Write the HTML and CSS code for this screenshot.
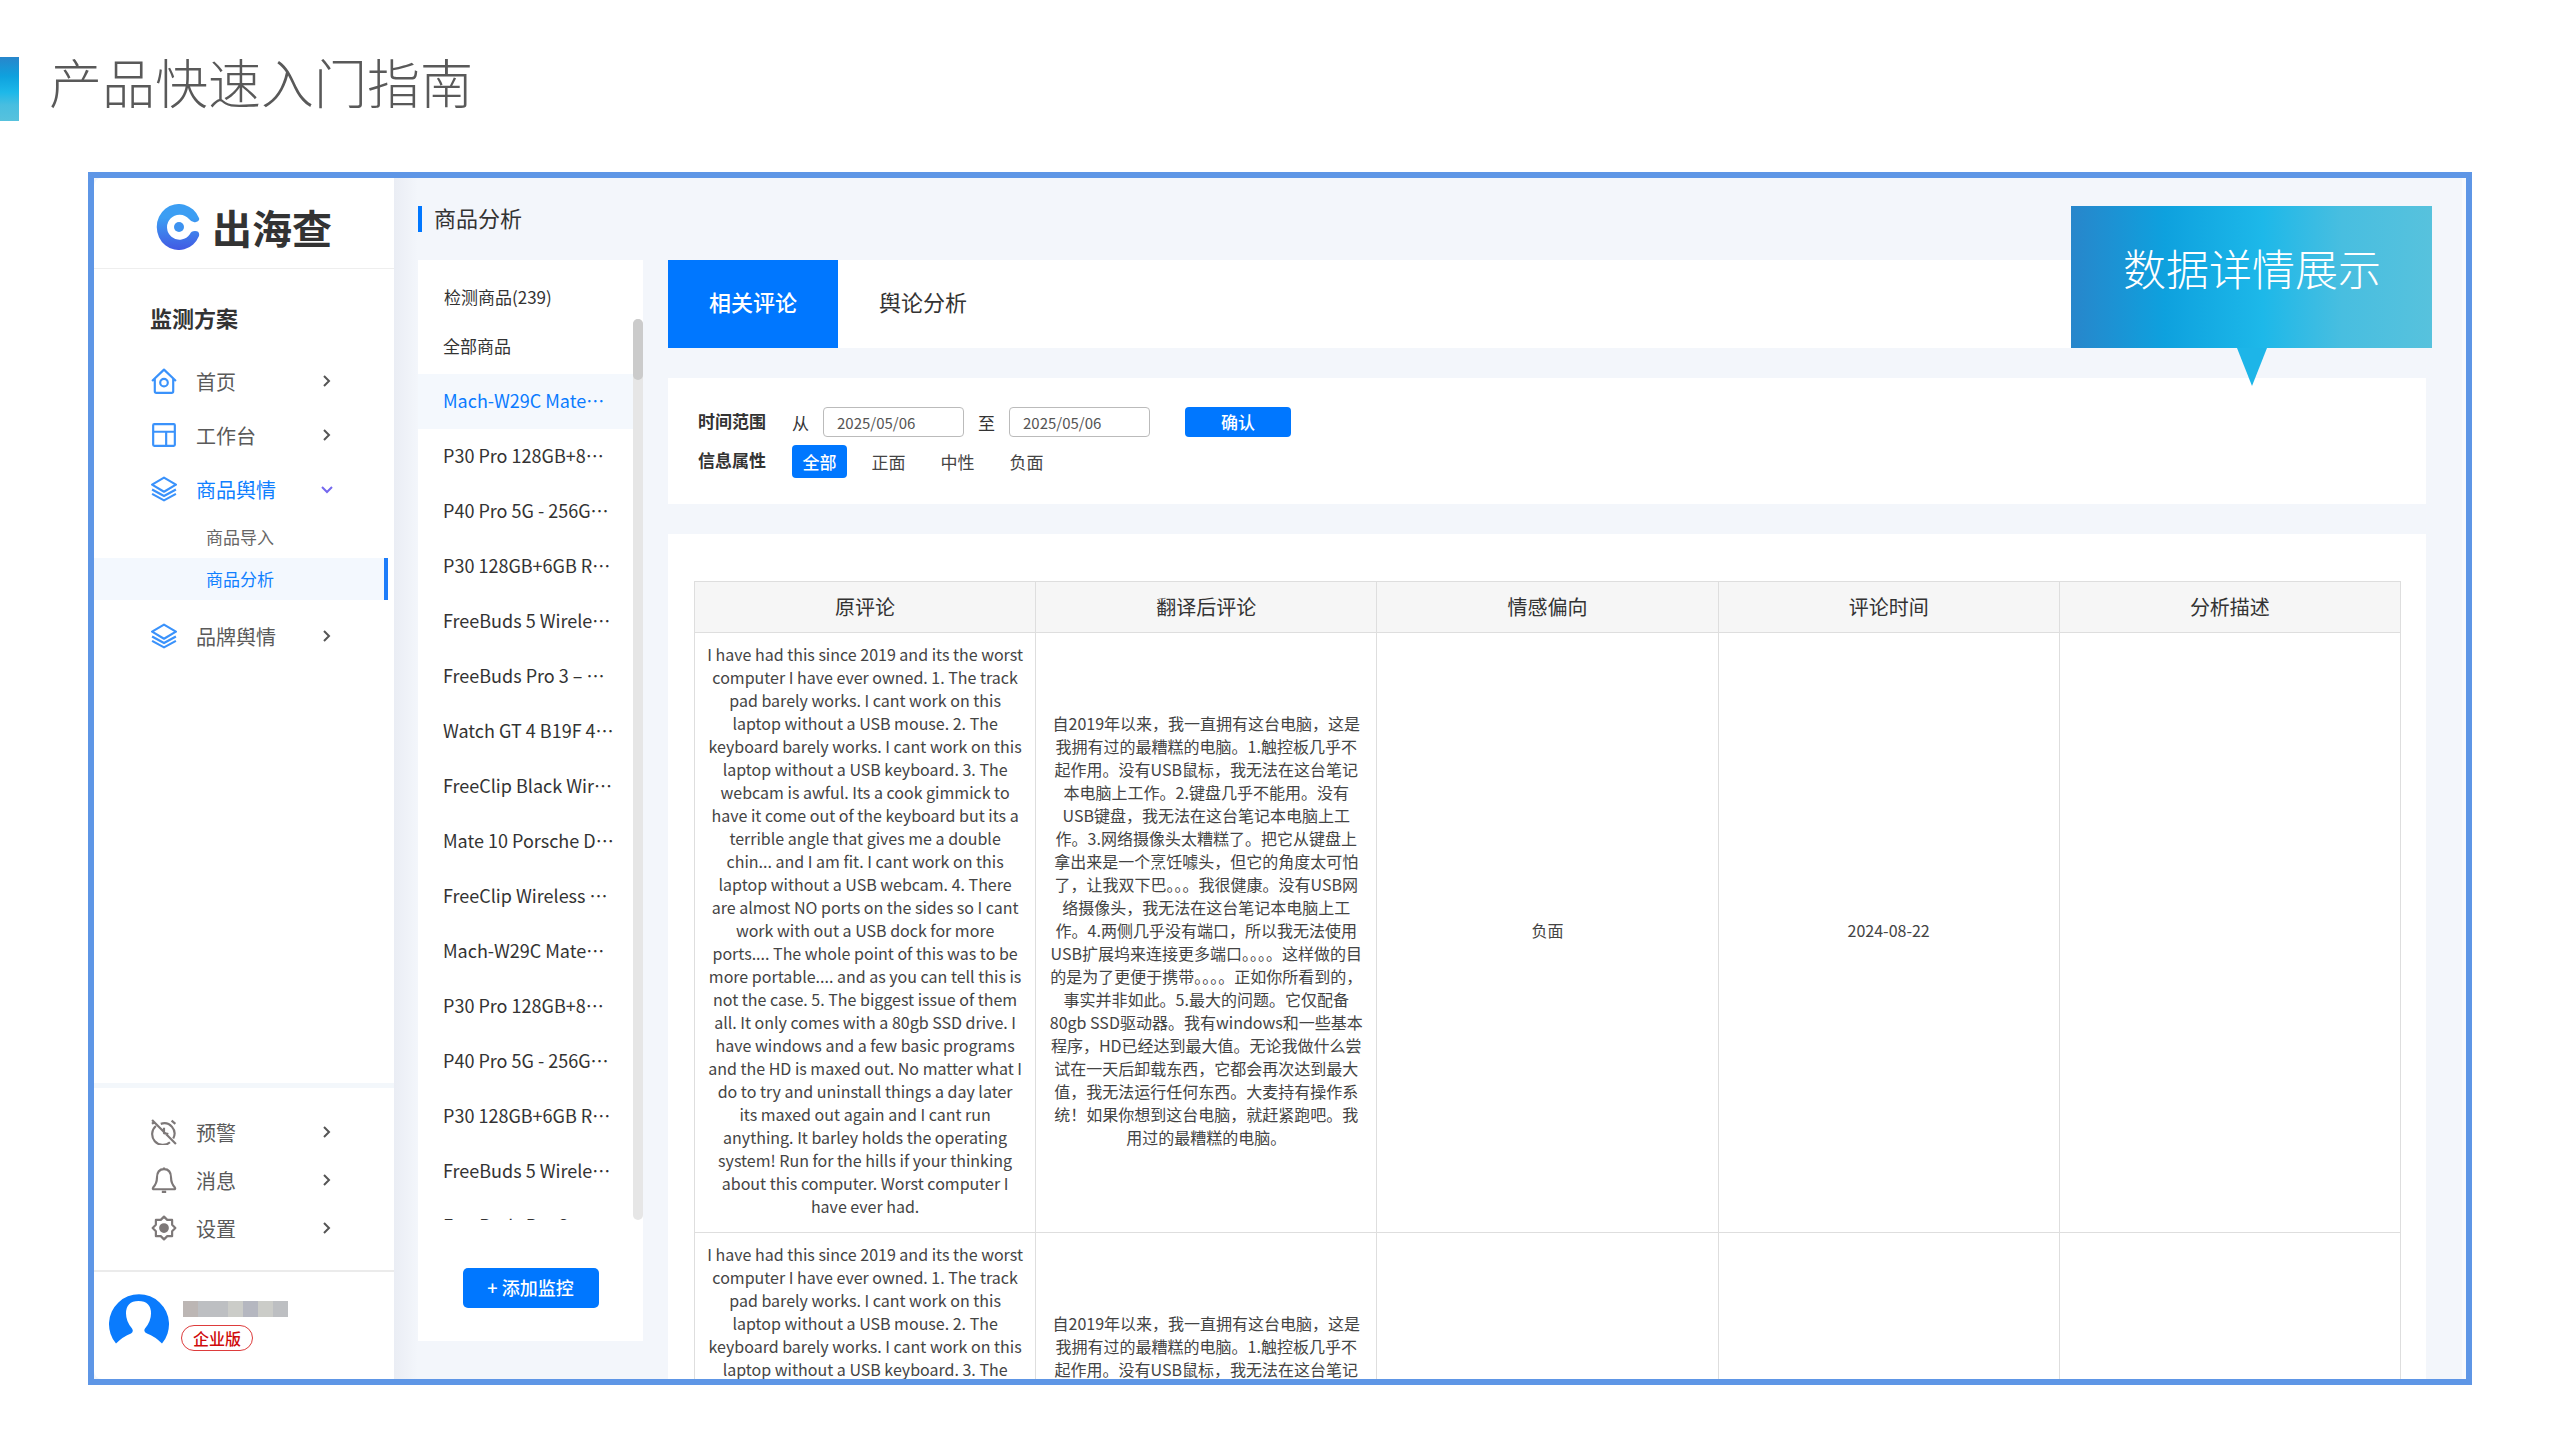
FILE: index.html
```
<!DOCTYPE html>
<html lang="zh-CN">
<head>
    <meta charset="UTF-8">
    <meta name="viewport" content="width=device-width, initial-scale=1.0">
    <title>产品快速入门指南</title>
    <link rel="stylesheet" href="styles.css">
</head>
<body>
    <header class="page-header">
        <div class="page-mark"></div>
        <h1>产品快速入门指南</h1>
    </header>

    <div class="frame">
        <!-- 左侧导航 -->
        <aside class="sidebar">
            <div class="logo">
                <svg class="logo-icon" viewBox="0 0 44 46">
                    <defs>
                        <linearGradient id="logoFill" x1="0" y1="0" x2="0" y2="1">
                            <stop offset="0.3" stop-color="#3c9ef3"></stop>
                            <stop offset="1" stop-color="#4259e3"></stop>
                        </linearGradient>
                    </defs>
                    <path d="M43 14A22 23 0 1 0 43 32Q44 27 39 27Q35 27 34 30A12.5 12.5 0 1 1 33 15Q36 19 40 18Q44 17 43 14Z" fill="url(#logoFill)"></path>
                    <circle cx="23" cy="23" r="5" fill="#3d92f0"></circle>
                </svg>
                <span class="logo-text">出海查</span>
            </div>

            <h2>监测方案</h2>
            <nav class="nav">
                <a class="nav-item" href="#">
                    <svg class="icon" viewBox="0 0 24 24"><path d="M1 12L12 1.5L23 12M3.5 10V21.5Q3.5 23 5 23H19Q20.5 23 20.5 21.5V10"></path><circle cx="12" cy="13.5" r="3.5"></circle></svg>
                    <span>首页</span>
                    <svg class="arrow" viewBox="0 0 12 12"><path d="M3 1L8 6L3 11"></path></svg>
                </a>
                <a class="nav-item" href="#">
                    <svg class="icon" viewBox="0 0 24 24"><rect x="2" y="2" width="20" height="20" rx="1"></rect><path d="M2 9H22M14 9V22"></path></svg>
                    <span>工作台</span>
                    <svg class="arrow" viewBox="0 0 12 12"><path d="M3 1L8 6L3 11"></path></svg>
                </a>
                <a class="nav-item active" href="#">
                    <svg class="icon" viewBox="0 0 24 24"><path d="M12 1.5L23 8L12 14.5L1 8ZM1 12.5L12 18.5L23 12.5M1 16.5L12 22.5L23 16.5"></path></svg>
                    <span>商品舆情</span>
                    <svg class="arrow" viewBox="0 0 12 12"><path d="M1 4L6 9L11 4"></path></svg>
                </a>
                <div class="sub-nav">
                    <a href="#">商品导入</a>
                    <a class="current" href="#">商品分析</a>
                </div>
                <a class="nav-item" href="#">
                    <svg class="icon" viewBox="0 0 24 24"><path d="M12 1.5L23 8L12 14.5L1 8ZM1 12.5L12 18.5L23 12.5M1 16.5L12 22.5L23 16.5"></path></svg>
                    <span>品牌舆情</span>
                    <svg class="arrow" viewBox="0 0 12 12"><path d="M3 1L8 6L3 11"></path></svg>
                </a>
            </nav>

            <nav class="nav tools">
                <a class="nav-item" href="#">
                    <svg class="icon" viewBox="0 0 24 24"><path d="M1 1L23 23M4.5 6.5A9.5 9.5 0 0 0 17.5 21.5M9 4.5A9.5 9.5 0 0 1 20.5 18M12 8V13L16 14M19 1.5L22.5 4.5M1 4.5L3 2.5"></path></svg>
                    <span>预警</span>
                    <svg class="arrow" viewBox="0 0 12 12"><path d="M3 1L8 6L3 11"></path></svg>
                </a>
                <a class="nav-item" href="#">
                    <svg class="icon" viewBox="0 0 24 24"><path d="M12 2Q18.5 2 18.5 10Q18.5 15 22 19Q23 20.5 21 20.5H3Q1 20.5 2 19Q5.5 15 5.5 10Q5.5 2 12 2ZM10 23H14M12 0.5V2"></path></svg>
                    <span>消息</span>
                    <svg class="arrow" viewBox="0 0 12 12"><path d="M3 1L8 6L3 11"></path></svg>
                </a>
                <a class="nav-item" href="#">
                    <svg class="icon" viewBox="0 0 24 24"><path d="M12 1.5L15 4.5H19.5V9L22.5 12L19.5 15V19.5H15L12 22.5L9 19.5H4.5V15L1.5 12L4.5 9V4.5H9Z"></path><circle class="dot" cx="12" cy="12" r="3.5"></circle></svg>
                    <span>设置</span>
                    <svg class="arrow" viewBox="0 0 12 12"><path d="M3 1L8 6L3 11"></path></svg>
                </a>
            </nav>

            <div class="user">
                <svg class="avatar" viewBox="0 0 60 60">
                    <path d="M7 49A30 30 0 1 1 53 49Q46 42 38 39Q34 37 36 34Q42 27 42 19Q42 6.5 29.5 6.5Q17 6.5 17 19Q17 27 23 34Q25 37 22 39Q14 42 7 49Z" fill="#0a7bfd"></path>
                </svg>
                <div class="user-info">
                    <div class="user-name"><i></i><i></i><i></i><i></i><i></i><i></i><i></i></div>
                    <span class="badge">企业版</span>
                </div>
            </div>
        </aside>

        <main class="main">
            <h2 class="main-title">商品分析</h2>
            <div class="columns">
                <!-- 商品列表 -->
                <section class="products">
                    <div class="products-count">检测商品(239)</div>
                    <div class="products-body">
                        <ul class="product-list">
                            <li class="all">全部商品</li>
                            <li class="selected">Mach-W29C Mate…</li>
                            <li>P30 Pro 128GB+8…</li>
                            <li>P40 Pro 5G - 256G…</li>
                            <li>P30 128GB+6GB R…</li>
                            <li>FreeBuds 5 Wirele…</li>
                            <li>FreeBuds Pro 3 – …</li>
                            <li>Watch GT 4 B19F 4…</li>
                            <li>FreeClip Black Wir…</li>
                            <li>Mate 10 Porsche D…</li>
                            <li>FreeClip Wireless …</li>
                            <li>Mach-W29C Mate…</li>
                            <li>P30 Pro 128GB+8…</li>
                            <li>P40 Pro 5G - 256G…</li>
                            <li>P30 128GB+6GB R…</li>
                            <li>FreeBuds 5 Wirele…</li>
                            <li>FreeBuds Pro 3 – …</li>
                        </ul>
                        <div class="scrollbar"><div class="thumb"></div></div>
                    </div>
                    <button class="add-button" type="button">+ 添加监控</button>
                </section>

                <section class="content">
                    <div class="tabs">
                        <button class="tab active" type="button">相关评论</button>
                        <button class="tab" type="button">舆论分析</button>
                    </div>

                    <form class="filters">
                        <div class="filter-row">
                            <span class="filter-name">时间范围</span>
                            <label for="dateFrom">从</label>
                            <input type="text" id="dateFrom" value="2025/05/06">
                            <label for="dateTo">至</label>
                            <input type="text" id="dateTo" value="2025/05/06">
                            <button class="confirm" type="button">确认</button>
                        </div>
                        <div class="filter-row">
                            <span class="filter-name">信息属性</span>
                            <div class="options">
                                <button class="option active" type="button">全部</button>
                                <button class="option" type="button">正面</button>
                                <button class="option" type="button">中性</button>
                                <button class="option" type="button">负面</button>
                            </div>
                        </div>
                    </form>

                    <div class="table-card">
                        <table>
                            <thead>
                                <tr>
                                    <th>原评论</th>
                                    <th>翻译后评论</th>
                                    <th>情感偏向</th>
                                    <th>评论时间</th>
                                    <th>分析描述</th>
                                </tr>
                            </thead>
                            <tbody>
                                <tr>
                                    <td>I have had this since 2019 and its the worst computer I have ever owned. 1. The track pad barely works. I cant work on this laptop without a USB mouse. 2. The keyboard barely works. I cant work on this laptop without a USB keyboard. 3. The webcam is awful. Its a cook gimmick to have it come out of the keyboard but its a terrible angle that gives me a double chin... and I am fit. I cant work on this laptop without a USB webcam. 4. There are almost NO ports on the sides so I cant work with out a USB dock for more ports.... The whole point of this was to be more portable.... and as you can tell this is not the case. 5. The biggest issue of them all. It only comes with a 80gb SSD drive. I have windows and a few basic programs and the HD is maxed out. No matter what I do to try and uninstall things a day later its&nbsp;maxed out again and I cant run anything. It barley holds the operating system! Run for the hills if your thinking about this computer. Worst computer I have ever had.</td>
                                    <td class="translated">自2019年以来，我一直拥有这台电脑，这是我拥有过的最糟糕的电脑。1.触控板几乎不起作用。没有USB鼠标，我无法在这台笔记本电脑上工作。2.键盘几乎不能用。没有USB键盘，我无法在这台笔记本电脑上工作。3.网络摄像头太糟糕了。把它从键盘上拿出来是一个烹饪噱头，但它的角度太可怕了，让我双下巴。。。我很健康。没有USB网络摄像头，我无法在这台笔记本电脑上工作。4.两侧几乎没有端口，所以我无法使用USB扩展坞来连接更多端口。。。。这样做的目的是为了更便于携带。。。。正如你所看到的，事实并非如此。5.最大的问题。它仅配备80gb SSD驱动器。我有windows和一些基本程序，HD已经达到最大值。无论我做什么尝试在一天后卸载东西，它都会再次达到最大值，我无法运行任何东西。大麦持有操作系统！如果你想到这台电脑，就赶紧跑吧。我用过的最糟糕的电脑。</td>
                                    <td>负面</td>
                                    <td>2024-08-22</td>
                                    <td></td>
                                </tr>
                                <tr>
                                    <td>I have had this since 2019 and its the worst computer I have ever owned. 1. The track pad barely works. I cant work on this laptop without a USB mouse. 2. The keyboard barely works. I cant work on this laptop without a USB keyboard. 3. The webcam is awful. Its a cook gimmick to have it come out of the keyboard but its a terrible angle that gives me a double chin... and I am fit. I cant work on this laptop without a USB webcam. 4. There are almost NO ports on the sides so I cant work with out a USB dock for more ports.... The whole point of this was to be more portable.... and as you can tell this is not the case. 5. The biggest issue of them all. It only comes with a 80gb SSD drive. I have windows and a few basic programs and the HD is maxed out. No matter what I do to try and uninstall things a day later its&nbsp;maxed out again and I cant run anything. It barley holds the operating system! Run for the hills if your thinking about this computer. Worst computer I have ever had.</td>
                                    <td class="translated">自2019年以来，我一直拥有这台电脑，这是我拥有过的最糟糕的电脑。1.触控板几乎不起作用。没有USB鼠标，我无法在这台笔记本电脑上工作。2.键盘几乎不能用。没有USB键盘，我无法在这台笔记本电脑上工作。3.网络摄像头太糟糕了。把它从键盘上拿出来是一个烹饪噱头，但它的角度太可怕了，让我双下巴。。。我很健康。没有USB网络摄像头，我无法在这台笔记本电脑上工作。4.两侧几乎没有端口，所以我无法使用USB扩展坞来连接更多端口。。。。这样做的目的是为了更便于携带。。。。正如你所看到的，事实并非如此。5.最大的问题。它仅配备80gb SSD驱动器。我有windows和一些基本程序，HD已经达到最大值。无论我做什么尝试在一天后卸载东西，它都会再次达到最大值，我无法运行任何东西。大麦持有操作系统！如果你想到这台电脑，就赶紧跑吧。我用过的最糟糕的电脑。</td>
                                    <td>负面</td>
                                    <td>2024-08-22</td>
                                    <td></td>
                                </tr>
                            </tbody>
                        </table>
                    </div>
                </section>
            </div>
        </main>

        <!-- 提示气泡 -->
        <div class="callout">数据详情展示</div>
    </div>
</body>
</html>
```
FILE: styles.css
```
* {
    box-sizing: border-box;
}

body {
    font-family: "Noto Sans CJK SC", sans-serif;
    background-color: #fff;
    color: #333;
    display: flex;
    flex-direction: column;
    height: 100vh;
    margin: 0;
    overflow: hidden;
}

h1, h2, ul {
    margin: 0;
    padding: 0;
}

a {
    color: inherit;
    text-decoration: none;
}

button, input {
    font-family: inherit;
    border: none;
    padding: 0;
}

/* 页面标题 */
.page-header {
    display: flex;
    align-items: flex-start;
    gap: 30px;
    padding: 57px 0 51px;
}

.page-mark {
    width: 19px;
    height: 64px;
    background: linear-gradient(#2886cb, #0ea1de 30%, #1db8e9 55%, #48bee0 75%, #57c2dd);
}

h1 {
    font-size: 53px;
    font-weight: 300;
    line-height: 48px;
    color: #595959;
}

.frame {
    position: relative;
    display: flex;
    flex: 1;
    min-height: 0;
    margin: 0 88px 55px;
    border: 6px solid #5e96e6;
    background-color: #f3f6fb;
}

/* 左侧导航 */
.sidebar {
    display: flex;
    flex-direction: column;
    flex: 0 0 300px;
    background-color: #fff;
    border-radius: 8px 0 0 8px;
}

.logo {
    display: flex;
    align-items: center;
    gap: 12px;
    height: 91px;
    padding: 8px 0 0 62px;
    border-bottom: 1px solid #eee;
}

.logo-icon {
    width: 44px;
    height: 46px;
}

.logo-text {
    font-size: 40px;
    font-weight: 700;
    line-height: 46px;
}

.sidebar h2 {
    padding: 32px 0 21px 56px;
    font-size: 22px;
    line-height: 32px;
}

.nav-item {
    display: flex;
    align-items: center;
    gap: 19px;
    height: 54px;
    padding: 0 61px 0 57px;
    font-size: 20px;
    color: #5a5a5a;
}

.nav-item span {
    flex: 1;
}

.icon {
    width: 26px;
    height: 26px;
    fill: none;
    stroke: #3a92fb;
    stroke-width: 2;
    stroke-linejoin: round;
}

.arrow {
    width: 12px;
    height: 12px;
    fill: none;
    stroke: #555;
    stroke-width: 2;
}

.nav-item.active {
    color: #1080ff;
}

.active .arrow {
    stroke: #7468ee;
}

.sub-nav {
    padding: 0 6px 9px 0;
    font-size: 17px;
    line-height: 42px;
    color: #666;
}

.sub-nav a {
    display: block;
    padding-left: 112px;
}

.sub-nav .current {
    color: #1080ff;
    background-color: #f3f8fe;
    border-right: 4px solid #1d7dfa;
}

.tools {
    margin-top: auto;
    padding: 20px 0 18px;
    border-top: 5px solid #f3f7fb;
    border-bottom: 2px solid #ebebeb;
}

.tools .nav-item {
    height: 48px;
}

.tools .icon {
    stroke: #7d7878;
}

.tools .dot {
    fill: #7d7878;
}

.user {
    display: flex;
    gap: 12px;
    padding: 22px 15px 24px;
}

.avatar {
    width: 60px;
    height: 61px;
}

.user-info {
    display: flex;
    flex-direction: column;
    align-items: flex-start;
    gap: 8px;
    padding-top: 7px;
}

.user-name {
    display: flex;
    margin-left: 2px;
}

.user-name i {
    width: 15px;
    height: 16px;
    background-color: #bdbfc2;
}

.user-name i:first-child {
    background-color: #bcb6b4;
}

.user-name i:nth-child(4),
.user-name i:nth-child(6) {
    background-color: #cbccc8;
}

.user-name i:nth-child(5) {
    background-color: #b5b7c0;
}

.badge {
    padding: 0 11px;
    font-size: 16px;
    font-weight: 500;
    line-height: 24px;
    color: #cf0a0a;
    border: 1px solid #dd3b3b;
    border-radius: 14px;
}

/* 主区域 */
.main {
    display: flex;
    flex-direction: column;
    flex: 1;
    min-width: 0;
    padding: 24px 36px 0 24px;
    overflow: hidden;
    background: linear-gradient(90deg, #eaedf4, #f3f6fb 24px);
    border-right: 4px solid #f8fafd;
}

.main-title {
    padding: 0 0 4px 12px;
    margin: 4px 0 28px;
    font-size: 22px;
    font-weight: 400;
    line-height: 22px;
    border-left: 4px solid #0077ff;
}

.columns {
    display: flex;
    flex: 1;
    min-height: 0;
    gap: 25px;
}

.products {
    display: flex;
    flex-direction: column;
    flex: 0 0 225px;
    margin-bottom: 38px;
    background-color: #fff;
    font-size: 17px;
}

.products-count {
    padding: 15px 26px 1px;
    line-height: 43px;
}

.products-body {
    display: flex;
    flex: 1;
    min-height: 0;
}

.product-list {
    flex: 1;
    overflow: hidden;
    list-style: none;
}

.product-list li {
    padding: 0 0 2px 25px;
    font-size: 18px;
    line-height: 53px;
    white-space: nowrap;
}

.product-list .all {
    font-size: 17px;
}

.product-list .selected {
    color: #0a7bff;
    background-color: #f4f8fd;
}

.scrollbar {
    width: 10px;
    background-color: #e6e6e6;
    border-radius: 5px;
}

.thumb {
    height: 61px;
    background-color: #cbcbcb;
    border-radius: 5px;
}

.add-button {
    align-self: center;
    width: 136px;
    height: 40px;
    margin: 48px 0 33px;
    padding-bottom: 2px;
    font-size: 18px;
    font-weight: 500;
    color: #fff;
    background-color: #0077ff;
    border-radius: 5px;
}

.content {
    display: flex;
    flex-direction: column;
    flex: 1;
    min-width: 0;
    gap: 30px;
}

.tabs {
    display: flex;
    background-color: #fff;
}

.tab {
    width: 170px;
    height: 88px;
    padding-bottom: 6px;
    font-size: 22px;
    color: #333;
    background-color: #fff;
}

.tab.active {
    font-weight: 500;
    color: #fff;
    background-color: #0077ff;
}

.filters {
    display: flex;
    flex-direction: column;
    gap: 8px;
    padding: 29px 30px 26px;
    font-size: 17px;
    background-color: #fff;
}

.filter-row {
    display: flex;
    align-items: center;
}

.filter-name {
    margin-right: 26px;
    padding-bottom: 4px;
    font-weight: 700;
}

.filters input {
    width: 141px;
    height: 30px;
    margin: 0 14px;
    padding: 0 13px;
    font-size: 15px;
    color: #555;
    border: 1px solid #bbb;
    border-radius: 4px;
}

.confirm {
    width: 106px;
    height: 30px;
    margin-left: 21px;
    padding-bottom: 2px;
    font-size: 17px;
    font-weight: 500;
    color: #fff;
    background-color: #0077ff;
    border-radius: 4px;
}

.options {
    display: flex;
    gap: 14px;
}

.option {
    width: 55px;
    height: 33px;
    font-size: 17px;
    color: #444;
    background-color: #fff;
}

.option.active {
    font-weight: 500;
    color: #fff;
    background-color: #0077ff;
    border-radius: 4px;
}

/* 评论表格 */
.table-card {
    flex: 1;
    min-height: 0;
    padding: 47px 25px 0 26px;
    overflow: hidden;
    background-color: #fff;
}

table {
    width: 100%;
    table-layout: fixed;
    border-collapse: collapse;
}

th, td {
    border: 1px solid #dedede;
    text-align: center;
}

th {
    height: 51px;
    padding: 0 0 2px;
    font-size: 20px;
    font-weight: 400;
    background-color: #f6f6f6;
}

td {
    padding: 10px 11px 14px;
    font-size: 16px;
    line-height: 23px;
    color: #444;
}

td.translated {
    padding-left: 13px;
    padding-right: 13px;
}

/* 提示气泡 */
.callout {
    position: absolute;
    top: 28px;
    right: 34px;
    padding: 29px 51px 49px 52px;
    font-size: 43px;
    font-weight: 300;
    line-height: 64px;
    color: #fff;
    background: linear-gradient(90deg, #2886cb, #0ea1de 26%, #1db8e9 53%, #48bee0 75%, #57c2dd);
}

.callout::after {
    content: "";
    position: absolute;
    top: 100%;
    left: 50%;
    margin-left: -15px;
    border: 15px solid transparent;
    border-top: 38px solid #1db5e8;
    border-bottom: none;
}
```
